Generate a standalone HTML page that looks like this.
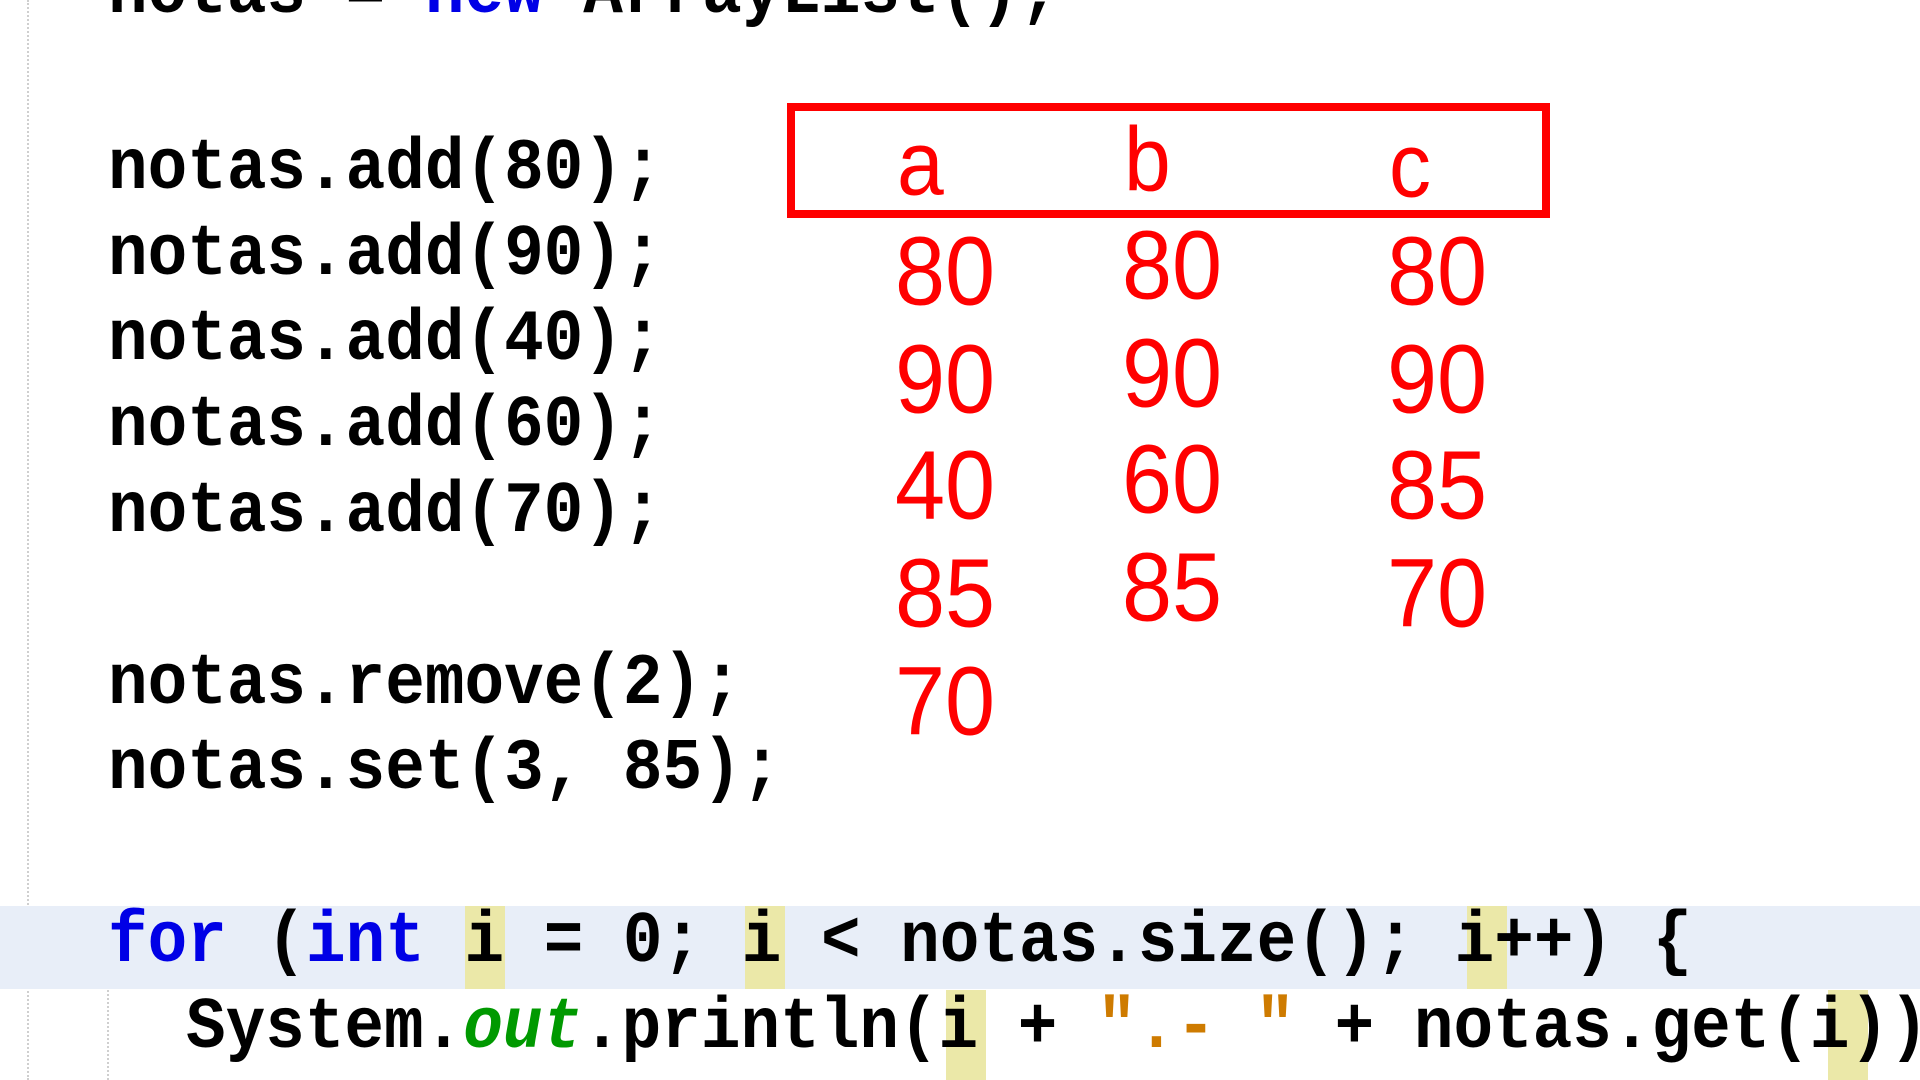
<!DOCTYPE html>
<html><head><meta charset="utf-8"><style>
html,body{margin:0;padding:0;}
body{width:1920px;height:1080px;background:#fff;position:relative;overflow:hidden;}
.c{position:absolute;left:108px;font-family:"Liberation Mono",monospace;font-weight:bold;font-size:66px;line-height:1;white-space:pre;color:#000;transform:scaleY(1.1);transform-origin:0 78%;}
.k{color:#0000e6;}
.g{color:#009900;font-style:italic;}
.s{color:#ce7b00;}
.r{position:absolute;font-family:"Liberation Sans",sans-serif;color:#ff0000;font-size:90px;line-height:1;transform:scaleY(1.08);transform-origin:0 90%;}
.hd{font-size:84px;}
</style></head><body>
<div style="position:absolute;left:27px;top:0;height:1080px;border-left:2px dotted #cfcfcf;"></div>
<div style="position:absolute;left:0;top:906px;width:1920px;height:83px;background:#e8eef8;"></div>
<div style="position:absolute;left:107px;top:990px;height:90px;border-left:2px dotted #cfcfcf;"></div>
<div style="position:absolute;left:465px;top:906px;width:40px;height:83px;background:#ebe8a8;"></div>
<div style="position:absolute;left:745px;top:906px;width:40px;height:83px;background:#ebe8a8;"></div>
<div style="position:absolute;left:1467px;top:906px;width:40px;height:83px;background:#ebe8a8;"></div>
<div style="position:absolute;left:946px;top:990px;width:40px;height:90px;background:#ebe8a8;"></div>
<div style="position:absolute;left:1828px;top:990px;width:40px;height:90px;background:#ebe8a8;"></div>

<div class="c" style="top:-38px">notas = <span class="k">new</span> ArrayList();</div>
<div class="c" style="top:138px">notas.add(80);</div>
<div class="c" style="top:224px">notas.add(90);</div>
<div class="c" style="top:309px">notas.add(40);</div>
<div class="c" style="top:395px">notas.add(60);</div>
<div class="c" style="top:481px">notas.add(70);</div>
<div class="c" style="top:653px">notas.remove(2);</div>
<div class="c" style="top:738px">notas.set(3, 85);</div>
<div class="c" style="top:911px"><span class="k">for</span> (<span class="k">int</span> i = 0; i &lt; notas.size(); i++) {</div>
<div class="c" style="top:997px;left:186px">System.<span class="g">out</span>.println(i + <span class="s">".- "</span> + notas.get(i));</div>

<div style="position:absolute;left:787px;top:103px;width:747px;height:99px;border:8px solid #ff0000;"></div>
<div class="r hd" style="left:897px;top:124px">a</div>
<div class="r hd" style="left:1124px;top:120px">b</div>
<div class="r hd" style="left:1389px;top:126px">c</div>

<div class="r" style="left:895px;top:230px">80</div>
<div class="r" style="left:895px;top:338px">90</div>
<div class="r" style="left:895px;top:444px">40</div>
<div class="r" style="left:895px;top:552px">85</div>
<div class="r" style="left:895px;top:660px">70</div>

<div class="r" style="left:1122px;top:224px">80</div>
<div class="r" style="left:1122px;top:332px">90</div>
<div class="r" style="left:1122px;top:438px">60</div>
<div class="r" style="left:1122px;top:546px">85</div>

<div class="r" style="left:1387px;top:230px">80</div>
<div class="r" style="left:1387px;top:338px">90</div>
<div class="r" style="left:1387px;top:444px">85</div>
<div class="r" style="left:1387px;top:552px">70</div>
</body></html>
